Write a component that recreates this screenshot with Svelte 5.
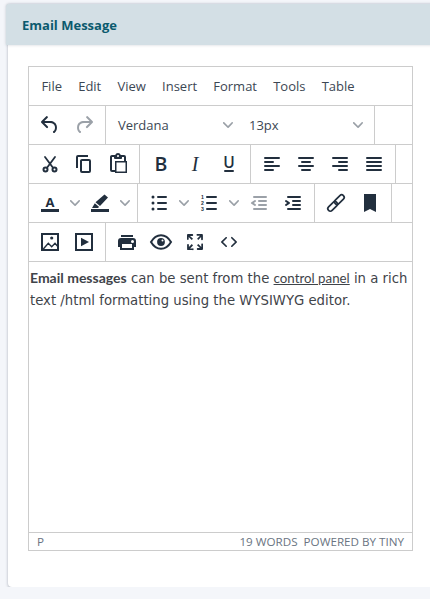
<script lang="ts">
	// Email message panel with a TinyMCE-style editor. Toolbar rows are plain data.
	type Tool = { icon: string; caret?: boolean; off?: boolean };

	const menus = ['File', 'Edit', 'View', 'Insert', 'Format', 'Tools', 'Table'];

	const rows: Tool[][][] = [
		[
			[{ icon: 'cut' }, { icon: 'copy' }, { icon: 'paste' }],
			[{ icon: 'bold' }, { icon: 'italic' }, { icon: 'underline' }],
			[{ icon: 'alignleft' }, { icon: 'aligncenter' }, { icon: 'alignright' }, { icon: 'justify' }]
		],
		[
			[{ icon: 'forecolor', caret: true }, { icon: 'backcolor', caret: true }],
			[
				{ icon: 'bullets', caret: true },
				{ icon: 'numbers', caret: true },
				{ icon: 'outdent', off: true },
				{ icon: 'indent' }
			],
			[{ icon: 'link' }, { icon: 'bookmark' }]
		],
		[
			[{ icon: 'image' }, { icon: 'media' }],
			[{ icon: 'print' }, { icon: 'preview' }, { icon: 'fullscreen' }, { icon: 'code' }]
		]
	];

	const paths: Record<string, string> = {
		undo: 'M6.4 8H12c3.7 0 6.2 2 6.8 5.1.6 2.7-.4 5.6-2.3 6.8a1 1 0 0 1-1-1.8c1.1-.6 1.8-2.7 1.4-4.6-.5-2.1-2.1-3.5-4.9-3.5H6.4l3.3 3.3a1 1 0 1 1-1.4 1.4l-5-5a1 1 0 0 1 0-1.4l5-5a1 1 0 0 1 1.4 1.4L6.4 8z',
		redo: 'M17.6 8H12c-3.7 0-6.2 2-6.8 5.1-.6 2.7.4 5.6 2.3 6.8a1 1 0 0 0 1-1.8c-1.1-.6-1.8-2.7-1.4-4.6.5-2.1 2.1-3.5 4.9-3.5h5.6l-3.3 3.3a1 1 0 1 0 1.4 1.4l5-5a1 1 0 0 0 0-1.4l-5-5a1 1 0 0 0-1.4 1.4L17.6 8z',
		copy: 'M16 3H6a2 2 0 0 0-2 2v11h2V5h10V3zm1 4a2 2 0 0 1 2 2v10a2 2 0 0 1-2 2h-7a2 2 0 0 1-2-2V9c0-1.2.9-2 2-2h7zm0 12V9h-7v10h7z',
		paste: 'M18 9V5h-2v1c0 .6-.4 1-1 1H9a1 1 0 0 1-1-1V5H6v13h3V9h9zM9 20H6a2 2 0 0 1-2-2V5c0-1.1.9-2 2-2h3.2A3 3 0 0 1 12 1a3 3 0 0 1 2.8 2H18a2 2 0 0 1 2 2v4h1v12H9v-1zm1.5-9.5v9h9v-9h-9zM12 3a1 1 0 0 0-1 1c0 .5.4 1 1 1s1-.5 1-1-.4-1-1-1z',
		alignleft: 'M5 5h14a1 1 0 0 1 0 2H5a1 1 0 1 1 0-2zm0 4h8a1 1 0 0 1 0 2H5a1 1 0 1 1 0-2zm0 8h8a1 1 0 0 1 0 2H5a1 1 0 0 1 0-2zm0-4h14a1 1 0 0 1 0 2H5a1 1 0 0 1 0-2z',
		aligncenter: 'M5 5h14a1 1 0 0 1 0 2H5a1 1 0 1 1 0-2zm3 4h8a1 1 0 0 1 0 2H8a1 1 0 1 1 0-2zm0 8h8a1 1 0 0 1 0 2H8a1 1 0 0 1 0-2zm-3-4h14a1 1 0 0 1 0 2H5a1 1 0 0 1 0-2z',
		alignright: 'M5 5h14a1 1 0 0 1 0 2H5a1 1 0 1 1 0-2zm6 4h8a1 1 0 0 1 0 2h-8a1 1 0 0 1 0-2zm0 8h8a1 1 0 0 1 0 2h-8a1 1 0 0 1 0-2zm-6-4h14a1 1 0 0 1 0 2H5a1 1 0 0 1 0-2z',
		justify: 'M5 5h14a1 1 0 0 1 0 2H5a1 1 0 1 1 0-2zm0 4h14a1 1 0 0 1 0 2H5a1 1 0 1 1 0-2zm0 4h14a1 1 0 0 1 0 2H5a1 1 0 0 1 0-2zm0 4h14a1 1 0 0 1 0 2H5a1 1 0 0 1 0-2z',
		bullets: 'M11 5h8a1 1 0 0 1 0 2h-8a1 1 0 0 1 0-2zm0 6h8a1 1 0 0 1 0 2h-8a1 1 0 0 1 0-2zm0 6h8a1 1 0 0 1 0 2h-8a1 1 0 0 1 0-2zM4.500 6a1.500 1.500 0 1 1 3 0 1.500 1.500 0 0 1-3 0zm0 6a1.500 1.500 0 1 1 3 0 1.500 1.500 0 0 1-3 0zm0 6a1.500 1.500 0 1 1 3 0 1.500 1.500 0 0 1-3 0z',
		numbers: 'M10 5h9a1 1 0 0 1 0 2h-9a1 1 0 0 1 0-2zm0 6h9a1 1 0 0 1 0 2h-9a1 1 0 0 1 0-2zm0 6h9a1 1 0 0 1 0 2h-9a1 1 0 0 1 0-2z',
		outdent: 'M7 5h12a1 1 0 0 1 0 2H7a1 1 0 1 1 0-2zm5 4h7a1 1 0 0 1 0 2h-7a1 1 0 0 1 0-2zm0 4h7a1 1 0 0 1 0 2h-7a1 1 0 0 1 0-2zm-5 4h12a1 1 0 0 1 0 2H7a1 1 0 0 1 0-2zm1.600-3.800a1 1 0 0 1-1.200 1.600l-3-2a1 1 0 0 1 0-1.600l3-2a1 1 0 0 1 1.200 1.600L6.800 12l1.800 1.200z',
		indent: 'M7 5h12a1 1 0 0 1 0 2H7a1 1 0 1 1 0-2zm5 4h7a1 1 0 0 1 0 2h-7a1 1 0 0 1 0-2zm0 4h7a1 1 0 0 1 0 2h-7a1 1 0 0 1 0-2zm-5 4h12a1 1 0 0 1 0 2H7a1 1 0 0 1 0-2zm-2.600-3.800L6.200 12l-1.800-1.200a1 1 0 0 1 1.200-1.600l3 2a1 1 0 0 1 0 1.600l-3 2a1 1 0 1 1-1.200-1.600z',
		bookmark: 'M6 3h12v18l-6-3-6 3V3z',
		print: 'M18 8H6a3 3 0 0 0-3 3v6h2v3h14v-3h2v-6a3 3 0 0 0-3-3zm-1 10H7v-4h10v4zm.5-5a1.500 1.500 0 1 1 0-3 1.500 1.500 0 0 1 0 3zm.5-8H6v2h12V5z',
		fullscreen: 'M15.300 10l-1.200-1.300 2.900-3h-2.300a.9.9 0 1 1 0-1.700H19c.5 0 .9.4.9.9v4.400a.9.9 0 1 1-1.800 0V7l-2.800 3zm0 4l3 3v-2.300a.9.9 0 1 1 1.700 0V19c0 .5-.4.9-.9.9h-4.400a.9.9 0 1 1 0-1.800H17l-3-2.900 1.300-1.200zM10 15.400l-2.900 3h2.300a.9.9 0 1 1 0 1.700H5a.9.9 0 0 1-.9-.9v-4.400a.9.9 0 1 1 1.800 0V17l2.900-3 1.200 1.400zM8.700 10L5.700 7v2.300a.9.9 0 0 1-1.700 0V5c0-.5.4-.9.9-.9h4.400a.9.9 0 0 1 0 1.800H7l3 2.900-1.300 1.200z',
		code: 'M9.800 15.700c.3.3.3.8 0 1-.3.4-.9.4-1.200 0l-4.400-4.100a.8.8 0 0 1 0-1.200l4.400-4.200c.3-.3.9-.3 1.200 0 .3.3.3.8 0 1.100L6 12l3.800 3.700zM14.200 15.700c-.3.3-.3.8 0 1 .4.4.9.4 1.200 0l4.400-4.100c.3-.3.3-.9 0-1.200l-4.400-4.200a.8.8 0 0 0-1.200 0c-.3.3-.3.8 0 1.100L18 12l-3.800 3.700z'
	};
</script>

{#snippet icon(name: string)}
	<svg class="icon" viewBox="0 0 24 24" width="24" height="24" aria-hidden="true">
		{#if paths[name]}
			<path d={paths[name]} />
		{/if}
		{#if name === 'cut'}
			<path class="blade" d="M7 5 14.800 15.500M17 5 9.200 15.500" />
			<circle class="line" cx="7.500" cy="17.500" r="2" />
			<circle class="line" cx="16.500" cy="17.500" r="2" />
		{:else if name === 'bold'}
			<text class="glyph-b" x="12" y="19" text-anchor="middle">B</text>
		{:else if name === 'italic'}
			<text class="glyph-i" x="12" y="19" text-anchor="middle">I</text>
		{:else if name === 'underline'}
			<text class="glyph-u" x="12" y="16" text-anchor="middle">U</text>
			<rect x="7" y="18" width="10" height="2" rx="1" />
		{:else if name === 'forecolor'}
			<text class="glyph-a" x="12" y="15.500" text-anchor="middle">A</text>
			<rect x="3" y="18" width="18" height="3" />
		{:else if name === 'backcolor'}
			<path d="M16.500 3.500 20 6.500 12 15l-4.500-3.800 9-7.700zM6.800 12.200l4.400 3.800-1.400 1H4l2.800-4.800z" />
			<rect x="3" y="18" width="18" height="3" />
		{:else if name === 'numbers'}
			<text class="glyph-n" x="5.500" y="7.900" text-anchor="middle">1</text>
			<text class="glyph-n" x="5.500" y="13.900" text-anchor="middle">2</text>
			<text class="glyph-n" x="5.500" y="19.900" text-anchor="middle">3</text>
		{:else if name === 'link'}
			<g class="chain" transform="rotate(-45 12 12)">
				<rect x="1.500" y="9.500" width="11.500" height="5" rx="2.500" />
				<rect x="11" y="9.500" width="11.500" height="5" rx="2.500" />
			</g>
		{:else if name === 'image'}
			<rect class="line" x="4" y="4" width="16" height="16" />
			<circle cx="13.700" cy="8" r="1.600" />
			<path class="thin" d="M5.300 19 10.300 13.300 13.700 16.700 17 13.300 20 16.700" />
		{:else if name === 'media'}
			<rect class="line" x="4" y="4" width="16" height="16" />
			<path d="M9 7.700 17 12l-8 4.300V7.700z" />
		{:else if name === 'preview'}
			<path class="line" d="M2 12c2.600-4.400 6-6.800 10-6.800s7.400 2.400 10 6.800c-2.600 4.400-6 6.800-10 6.800S4.600 16.400 2 12z" />
			<circle cx="12" cy="12" r="3.900" />
			<circle class="spark" cx="13.500" cy="10.500" r="1" />
		{/if}
	</svg>
{/snippet}

{#snippet caret()}
	<svg class="caret" viewBox="0 0 10 10" width="10" height="10" aria-hidden="true">
		<path d="M8.700 2.200c.3-.3.8-.3 1 0 .4.4.4.9 0 1.200L5.700 7.800c-.3.3-.9.3-1.200 0L.2 3.400a.8.8 0 0 1 0-1.200c.3-.3.8-.3 1.100 0L5 6l3.700-3.800z" />
	</svg>
{/snippet}

<section class="card">
	<header class="card-head">Email Message</header>
	<div class="card-body">
		<div class="editor">
			<nav class="menubar">
				{#each menus as m}
					<span class="menu">{m}</span>
				{/each}
			</nav>

			<div class="toolbar">
				<div class="group">
					<span class="btn">{@render icon('undo')}</span>
					<span class="btn off">{@render icon('redo')}</span>
				</div>
				<div class="group">
					<span class="select font">Verdana{@render caret()}</span>
					<span class="select size">13px{@render caret()}</span>
				</div>
			</div>

			{#each rows as row, r}
				<div class="toolbar">
					{#each row as group, g}
						<div class="group" class:bare={r === rows.length - 1 && g === row.length - 1}>
							{#each group as tool}
								<span class="btn" class:off={tool.off}>{@render icon(tool.icon)}</span>
								{#if tool.caret}
									<span class="chev">{@render caret()}</span>
								{/if}
							{/each}
						</div>
					{/each}
				</div>
			{/each}

			<div class="content">
				<p><strong>Email messages</strong> <span>can be sent from the</span> <a href="#top">control panel</a> <span>in a rich</span> <span>text /html formatting using the WYSIWYG editor.</span></p>
			</div>

			<footer class="status">
				<span>P</span>
				<span>19 WORDS&nbsp; POWERED BY TINY</span>
			</footer>
		</div>
	</div>
</section>

<style>
	:global(body) {
		background: #f4f6fa;
		overflow: hidden;
	}

	.card {
		margin: 4px -12px 0 8px;
		height: 583px;
		display: flex;
		flex-direction: column;
		background: #fff;
		border-radius: 0 0 4px 4px;
		box-shadow: 0 1px 3px rgba(60, 70, 90, 0.4);
		font-family: 'Open Sans', sans-serif;
		color: #222f3e;
	}

	.card-head {
		height: 41px;
		margin-left: -2px;
		padding: 0 16px;
		display: flex;
		align-items: center;
		background: #d3dfe5;
		border-radius: 3px 3px 0 0;
		color: #0b5a6e;
		font-size: 13px;
		font-weight: 700;
		box-shadow: 0 0 3px rgba(60, 70, 90, 0.25);
	}

	.card-body {
		padding: 21px 0 0 20px;
	}

	.editor {
		width: 383px;
		height: 483px;
		display: flex;
		flex-direction: column;
		border: 1px solid #ccc;
	}

	.menubar {
		height: 38px;
		flex: none;
		padding-left: 12.400px;
		display: flex;
		align-items: center;
		gap: 16.200px;
		border-bottom: 1px solid #ccc;
		font-size: 13px;
		color: #3c4754;
	}

	.toolbar {
		height: 38px;
		flex: none;
		display: flex;
		border-bottom: 1px solid #ccc;
	}

	.group {
		display: flex;
		align-items: center;
		padding: 0 4px;
		border-right: 1px solid #ccc;
	}

	.group.bare {
		border-right: none;
	}

	.btn {
		width: 34px;
		height: 34px;
		flex: none;
		display: flex;
		align-items: center;
		justify-content: center;
	}

	.chev {
		width: 16px;
		height: 34px;
		display: flex;
		align-items: center;
		justify-content: center;
	}

	.icon {
		fill: #222f3e;
		overflow: visible;
	}

	.off .icon {
		opacity: 0.45;
	}

	.icon .line {
		fill: none;
		stroke: #222f3e;
		stroke-width: 2;
	}

	.icon .blade {
		fill: none;
		stroke: #222f3e;
		stroke-width: 1.800;
		stroke-linecap: round;
	}

	.icon .chain {
		fill: none;
		stroke: #222f3e;
		stroke-width: 1.700;
	}

	.icon .thin {
		fill: none;
		stroke: #222f3e;
		stroke-width: 1.400;
	}

	.icon .spark {
		fill: #fff;
	}

	.glyph-b {
		font: 600 19.500px 'Open Sans', sans-serif;
	}

	.glyph-i {
		font: italic 400 20px 'Liberation Serif', serif;
	}

	.glyph-u {
		font: 600 15.500px 'Open Sans', sans-serif;
	}

	.glyph-a {
		font: 700 13px 'Open Sans', sans-serif;
	}

	.glyph-n {
		font: 700 5.200px 'Liberation Sans', sans-serif;
	}

	.caret {
		fill: #222f3e;
		opacity: 0.45;
		flex: none;
	}

	.select {
		height: 34px;
		padding: 0 8px;
		display: flex;
		align-items: center;
		justify-content: space-between;
		box-sizing: border-box;
		font-size: 13px;
		color: #3c4754;
	}

	.font {
		width: 131px;
	}

	.size {
		width: 129px;
		padding-right: 7px;
	}

	.content {
		flex: 1;
		padding: 5px 1px 0;
		font-family: 'DejaVu Sans', sans-serif;
		font-size: 13.250px;
		line-height: 22px;
		color: #3f444a;
	}

	.content p {
		margin: 0;
	}

	.content strong {
		font-family: Lato, sans-serif;
		font-size: 14px;
		font-weight: 700;
	}

	.content a {
		font-family: Lato, sans-serif;
		font-size: 13.300px;
		color: #3f444a;
		text-decoration: underline;
	}

	.status {
		height: 17px;
		flex: none;
		padding: 0 8px;
		display: flex;
		align-items: center;
		justify-content: space-between;
		border-top: 1px solid #ccc;
		font-size: 11.650px;
		color: #6a7482;
	}
</style>
